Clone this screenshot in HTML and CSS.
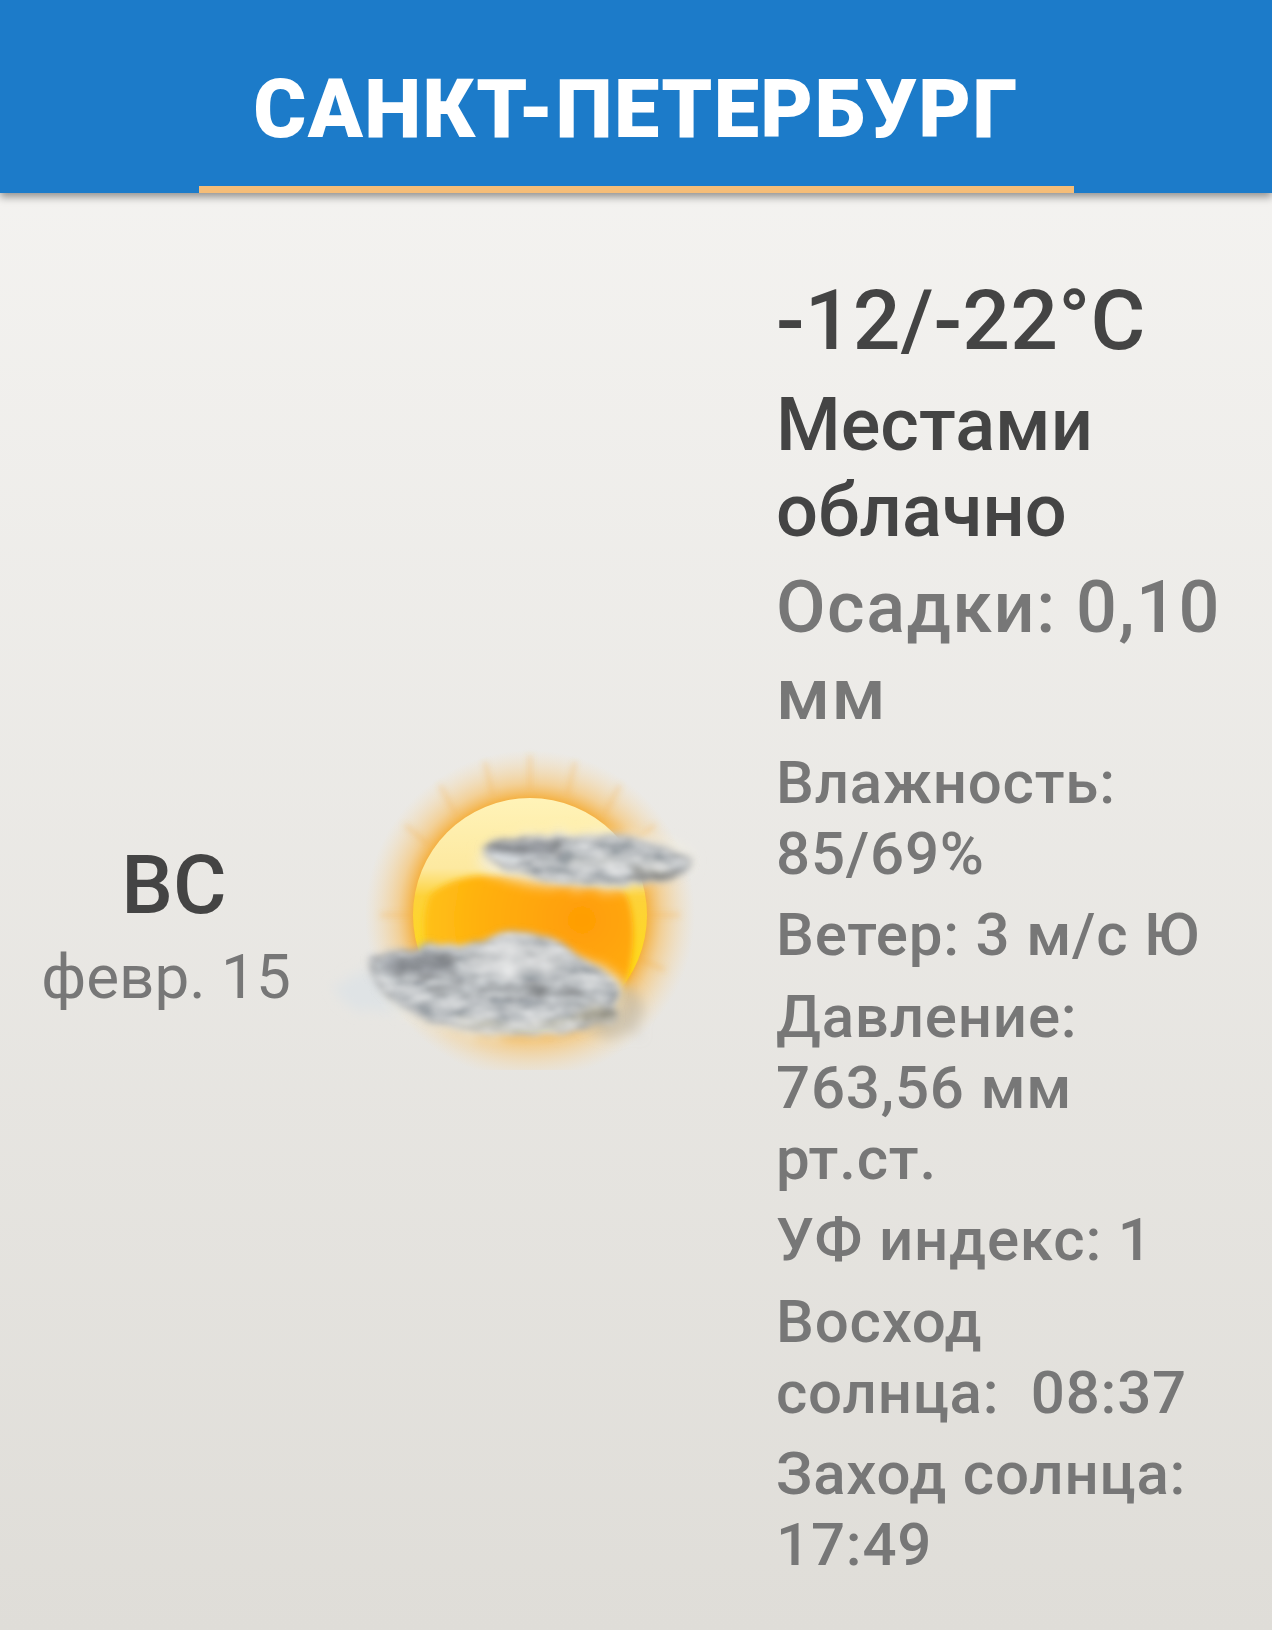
FILE: index.html
```html
<!DOCTYPE html>
<html lang="ru">
  <head>
    <meta charset="UTF-8" />
    <title>Санкт-Петербург</title>
    <link rel="stylesheet" href="styles.css">
  </head>

  <body>
    <header class="city-bar">
      <h1>Санкт-Петербург</h1>
      <div class="city-line"></div>
    </header>

    <main class="forecast">
      <div class="day">
        <div class="day-name">ВС</div>
        <div class="day-date">февр. 15</div>
      </div>

      <svg class="weather-icon" viewBox="0 0 400 340" aria-hidden="true">
        <defs>
          <radialGradient id="halo" cx="210" cy="185" r="165" gradientUnits="userSpaceOnUse">
            <stop offset="0.68" stop-color="#f5a21a" stop-opacity="0.95" />
            <stop offset="0.8" stop-color="#f8c064" stop-opacity="0.6" />
            <stop offset="1" stop-color="#f8d9a4" stop-opacity="0" />
          </radialGradient>
          <linearGradient id="sunTop" x1="0" y1="0" x2="0" y2="1">
            <stop offset="0" stop-color="#fff3b8" />
            <stop offset="0.3" stop-color="#fde9a0" />
            <stop offset="0.42" stop-color="#fdd23a" />
            <stop offset="1" stop-color="#fee000" />
          </linearGradient>
          <radialGradient id="sunCore" cx="262" cy="190" r="170" gradientUnits="userSpaceOnUse">
            <stop offset="0" stop-color="#ff9d05" />
            <stop offset="0.6" stop-color="#ffb010" />
            <stop offset="1" stop-color="#ffc414" />
          </radialGradient>
          <filter id="soft" x="-20%" y="-20%" width="140%" height="140%">
            <feGaussianBlur stdDeviation="3" />
          </filter>
          <!-- torn edge, then a faint grey noise laid over the shape -->
          <filter id="cloudy" x="-20%" y="-30%" width="140%" height="160%">
            <feTurbulence type="fractalNoise" baseFrequency="0.06" numOctaves="4" seed="4" result="edge" />
            <feDisplacementMap in="SourceGraphic" in2="edge" scale="12" />
            <feGaussianBlur stdDeviation="4.2" result="shape" />
            <feTurbulence type="fractalNoise" baseFrequency="0.035 0.09" numOctaves="3" seed="12" />
            <feColorMatrix values="0.7 0 0 0 0.15 0.7 0 0 0 0.15 0.7 0 0 0 0.15 0 0 0 0 1" />
            <feGaussianBlur stdDeviation="2" />
            <feComposite in2="shape" operator="in" result="mottle" />
            <feBlend in="mottle" in2="shape" mode="overlay" />
          </filter>
          <filter id="haze" x="-30%" y="-40%" width="160%" height="180%">
            <feTurbulence type="fractalNoise" baseFrequency="0.09" numOctaves="3" seed="9" />
            <feDisplacementMap in="SourceGraphic" scale="22" />
            <feGaussianBlur stdDeviation="6" />
          </filter>
        </defs>

        <circle cx="210" cy="185" r="165" fill="url(#halo)" />
        <g stroke="#f3ae45" stroke-opacity="0.45" stroke-width="3" filter="url(#soft)">
          <path d="M210 25V60M165 32l8 34M255 32l-8 34M120 55l16 30M300 55l-16 30M85 95l24 20M335 95l-24 20M60 185h35M360 185h-35M75 240l28-12M345 240l-28-12" />
        </g>

        <circle cx="210" cy="185" r="117" fill="url(#sunTop)" />
        <path d="M110 165C150 130 220 150 300 158C318 170 320 240 292 285L125 260C102 230 100 190 110 165Z" fill="url(#sunCore)" filter="url(#soft)" />

        <!-- upper cloud -->
        <ellipse cx="265" cy="130" rx="108" ry="28" fill="#f3efe2" fill-opacity="0.75" filter="url(#haze)" />
        <g filter="url(#cloudy)">
          <path d="M165 118C190 108 240 111 290 106C320 107 345 121 372 131C370 143 345 151 310 151C280 157 230 154 200 141C180 136 165 128 165 118Z" fill="#bcc0c3" />
          <ellipse cx="205" cy="118" rx="36" ry="8" fill="#8f9398" />
          <ellipse cx="335" cy="143" rx="22" ry="6" fill="#94948f" />
          <path d="M250 134C285 130 320 132 345 137" stroke="#dcddda" stroke-width="4" fill="none" />
        </g>

        <!-- lower cloud -->
        <ellipse cx="60" cy="262" rx="42" ry="20" fill="#dfe3e5" filter="url(#haze)" />
        <ellipse cx="290" cy="280" rx="34" ry="28" fill="#b8b5a8" fill-opacity="0.55" filter="url(#haze)" />
        <ellipse cx="185" cy="262" rx="120" ry="44" fill="#eceade" fill-opacity="0.8" filter="url(#haze)" />
        <g filter="url(#cloudy)">
          <path d="M52 230C80 214 130 220 165 212C195 198 235 202 258 230C285 242 300 254 298 268C292 290 265 299 235 302C190 306 130 300 100 284C72 274 46 250 52 230Z" fill="#bcc0c3" />
          <ellipse cx="97" cy="234" rx="38" ry="12" fill="#8c9095" />
          <ellipse cx="195" cy="228" rx="50" ry="16" fill="#d4d6d7" />
          <path d="M110 262C160 255 220 260 275 268" stroke="#a4a8ab" stroke-width="8" fill="none" />
          <path d="M135 291C180 299 225 299 262 289" stroke="#dedcd0" stroke-width="6" fill="none" />
          <ellipse cx="275" cy="285" rx="22" ry="9" fill="#a8a596" />
        </g>
      </svg>

      <div class="details">
        <div class="temp">-12/-22°C</div>
        <div class="summary">Местами облачно</div>
        <div class="precip">Осадки: 0,10 мм</div>
        <div class="row">Влажность: 85/69%</div>
        <div class="row">Ветер: 3 м/с Ю</div>
        <div class="row">Давление: 763,56 мм рт.ст.</div>
        <div class="row">УФ индекс: 1</div>
        <div class="row">Восход солнца:&nbsp;&nbsp;08:37</div>
        <div class="row">Заход солнца: 17:49</div>
      </div>
    </main>
  </body>
</html>
```

FILE: styles.css
```css
html,
body {
  height: 100%;
}

body {
  margin: 0;
  font-family: Roboto, "Liberation Sans", sans-serif;
  background: linear-gradient(#f6f5f3, #dfddd8);
  overflow: hidden;
}

.city-bar {
  position: relative;
  height: 193px;
  background-color: #1c7bc9;
  box-shadow: 0 4px 8px rgba(0, 0, 0, 0.4);
  display: flex;
  flex-direction: column;
  align-items: center;
}

.city-bar h1 {
  margin: 0;
  padding-top: 32px;
  flex: 1;
  display: flex;
  align-items: center;
  color: white;
  font-size: 81px;
  font-weight: 900;
  letter-spacing: 1.3px;
  text-transform: uppercase;
}

.city-line {
  width: 875px;
  height: 7px;
  background-color: #f5bd78;
}

.forecast {
  display: flex;
  align-items: center;
  padding-top: 66px;
}

.day {
  width: 320px;
  margin-top: 18px;
  padding-left: 12px;
  box-sizing: border-box;
  text-align: center;
}

.day-name {
  padding-left: 16px;
  font-size: 82px;
  font-weight: 500;
  color: #444;
  line-height: 96px;
}

.day-date {
  font-size: 62px;
  color: #777;
  line-height: 88px;
}

.weather-icon {
  width: 400px;
  height: 340px;
  flex: none;
  margin-bottom: 40px;
}

.details {
  margin-left: 56px;
  width: 452px;
  flex: none;
}

.temp {
  font-size: 84px;
  font-weight: 500;
  letter-spacing: 0.2px;
  color: #444;
  line-height: 123px;
}

.summary {
  font-size: 74px;
  font-weight: 500;
  color: #444;
  line-height: 86px;
  margin-bottom: 10px;
}

.precip {
  font-size: 72px;
  font-weight: 500;
  letter-spacing: 1.5px;
  color: #777;
  line-height: 87px;
  margin-bottom: -2px;
}

.row {
  font-size: 60px;
  font-weight: 500;
  letter-spacing: 0.8px;
  color: #777;
  line-height: 71px;
  margin-top: 10.5px;
}
```
